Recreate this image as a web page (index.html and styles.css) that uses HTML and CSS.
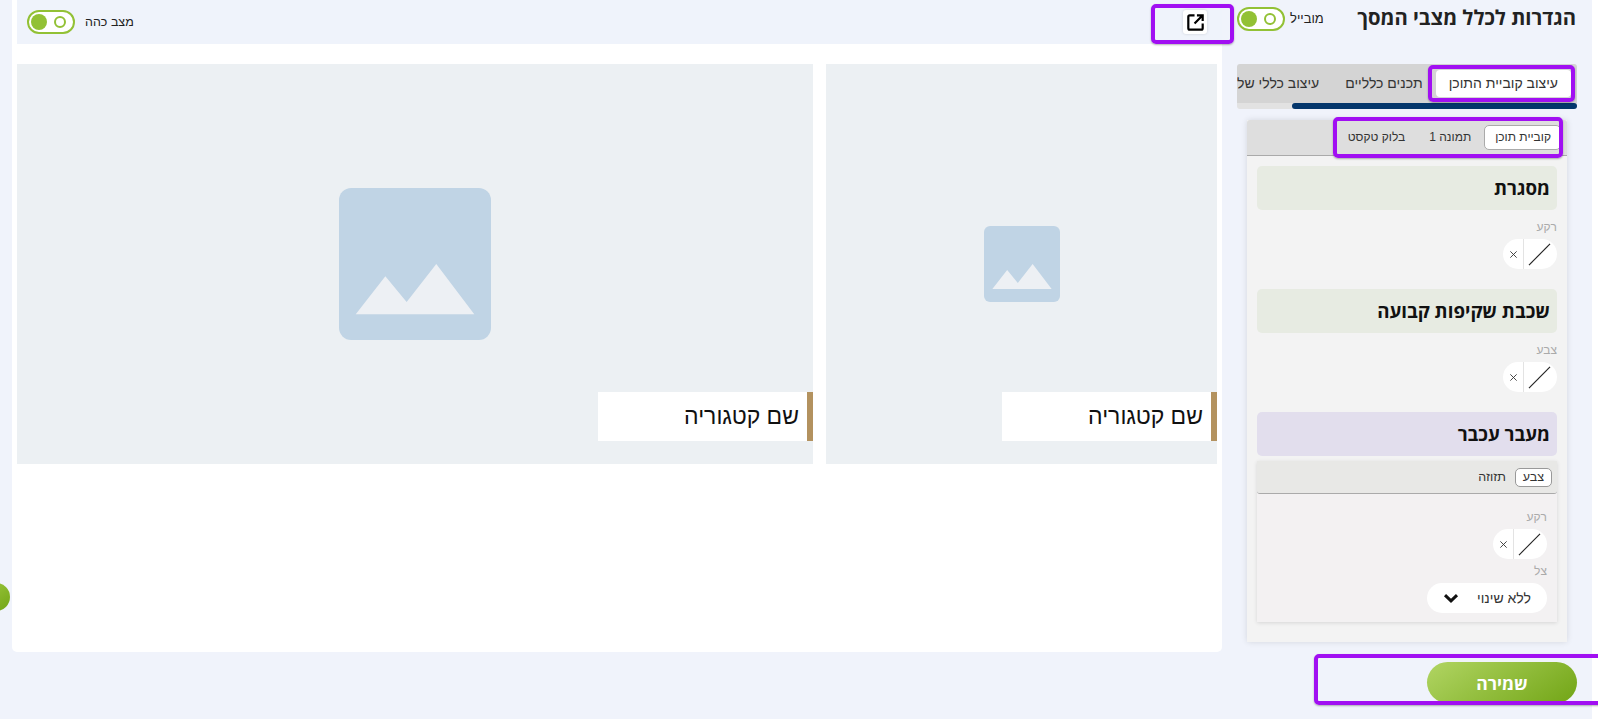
FILE: index.html
```html
<!DOCTYPE html>
<html lang="he" dir="rtl">
<head>
    <meta charset="utf-8">
    <title>הגדרות לכלל מצבי המסך</title>
    <link rel="stylesheet" href="styles.css">
</head>
<body>
    <div class="page">
        <div class="sidebar">
            <div class="sidebar-head">
                <h1>הגדרות לכלל מצבי המסך</h1>
                <span class="toggle-label">מובייל</span>
                <span class="toggle"><i class="ring"></i><i class="knob"></i></span>
            </div>

            <div class="tabs">
                <div class="tab active">עיצוב קוביית התוכן</div>
                <div class="tab">תכנים כלליים</div>
                <div class="tab">עיצוב כללי של</div>
            </div>
            <div class="tabs-scroll"><div class="tabs-thumb"></div></div>

            <div class="panel">
                <div class="subtabs">
                    <div class="subtab active">קוביית תוכן</div>
                    <div class="subtab">תמונה 1</div>
                    <div class="subtab">בלוק טקסט</div>
                </div>
                <div class="panel-body">
                    <div class="section green">מסגרת</div>
                    <div class="field-label">רקע</div>
                    <div class="color-pick">
                        <span class="swatch"><svg viewBox="0 0 24 24"><path d="M1 23 23 1"/></svg></span>
                        <span class="clear"><svg viewBox="0 0 10 10"><path d="M1.5 1.5 8.5 8.5M8.5 1.5 1.5 8.5"/></svg></span>
                    </div>

                    <div class="section green">שכבת שקיפות קבועה</div>
                    <div class="field-label">צבע</div>
                    <div class="color-pick">
                        <span class="swatch"><svg viewBox="0 0 24 24"><path d="M1 23 23 1"/></svg></span>
                        <span class="clear"><svg viewBox="0 0 10 10"><path d="M1.5 1.5 8.5 8.5M8.5 1.5 1.5 8.5"/></svg></span>
                    </div>

                    <div class="section purple">מעבר עכבר</div>
                    <div class="hover-box">
                        <div class="hover-tabs">
                            <div class="hover-tab active">צבע</div>
                            <div class="hover-tab">תזוזה</div>
                        </div>
                        <div class="hover-body">
                            <div class="field-label">רקע</div>
                            <div class="color-pick">
                                <span class="swatch"><svg viewBox="0 0 24 24"><path d="M1 23 23 1"/></svg></span>
                                <span class="clear"><svg viewBox="0 0 10 10"><path d="M1.5 1.5 8.5 8.5M8.5 1.5 1.5 8.5"/></svg></span>
                            </div>
                            <div class="field-label shadow-label">צל</div>
                            <div class="select">
                                <span>ללא שינוי</span>
                                <svg viewBox="0 0 20 12"><path d="M2.5 2.5 10 9.5 17.5 2.5"/></svg>
                            </div>
                        </div>
                    </div>
                </div>
            </div>

            <div class="save-row">
                <button class="save">שמירה</button>
            </div>
        </div>

        <div class="main">
            <div class="topbar">
                <span class="open-link">
                    <svg viewBox="0 0 24 24"><path d="M11 4.500H6A1.500 1.500 0 0 0 4.500 6v12A1.500 1.500 0 0 0 6 19.500h12a1.500 1.500 0 0 0 1.500-1.500v-5M11 13 19 5M13.500 4.500h6v6"/></svg>
                </span>
                <div class="dark-mode">
                    <span class="dark-label">מצב כהה</span>
                    <span class="toggle"><i class="ring"></i><i class="knob"></i></span>
                </div>
            </div>

            <div class="cards">
                <div class="card small">
                    <svg class="placeholder" viewBox="0 0 100 100"><rect width="100" height="100" rx="8" fill="#c0d4e5"/><path d="M11 83 30.500 58 44.500 75 64 50 89 83Z" fill="#edf0f4"/></svg>
                    <div class="card-label">שם קטגוריה</div>
                </div>
                <div class="card large">
                    <svg class="placeholder" viewBox="0 0 100 100"><rect width="100" height="100" rx="8" fill="#c0d4e5"/><path d="M11 83 30.500 58 44.500 75 64 50 89 83Z" fill="#edf0f4"/></svg>
                    <div class="card-label">שם קטגוריה</div>
                </div>
            </div>
        </div>

        <div class="side-handle"></div>

        <!-- סימוני הדגשה מעל המסך -->
        <div class="mark mark-link"></div>
        <div class="mark mark-tab"></div>
        <div class="mark mark-subtabs"></div>
        <div class="mark mark-save"></div>
    </div>
</body>
</html>
```

FILE: styles.css
```css
html {
    background: white;
}
body {
    margin: 0;
    font-family: 'Liberation Sans', Arial, sans-serif;
    color: #222;
    overflow: hidden;
}
.page {
    position: relative;
    display: flex;
    width: 1592px;
    height: 719px;
    margin-right: 6px;
    background: #f0f3fb;
}

/* sidebar */
.sidebar {
    flex: none;
    width: 370px;
    box-sizing: border-box;
    padding: 0 15px;
}
.sidebar-head {
    display: flex;
    align-items: flex-start;
    height: 64px;
    padding-right: 1px;
}
.sidebar-head h1 {
    margin: 3px 0 0 0;
    font-family: 'Open Sans', 'Liberation Sans', sans-serif;
    font-size: 20.250px;
    line-height: 28px;
    font-weight: bold;
    white-space: nowrap;
}
.toggle-label {
    margin: 11px auto 0 5px;
    font-size: 13px;
    line-height: 16px;
}
.toggle {
    flex: none;
    display: flex;
    justify-content: space-between;
    align-items: center;
    box-sizing: border-box;
    width: 48px;
    height: 24px;
    padding: 0 7px 0 2px;
    border: 2.500px solid #92c135;
    border-radius: 12px;
    background: white;
}
.sidebar-head .toggle {
    margin-top: 7px;
}
.knob {
    width: 16px;
    height: 16px;
    border-radius: 50%;
    background: #92c135;
}
.ring {
    box-sizing: border-box;
    width: 12px;
    height: 12px;
    border: 2px solid #92c135;
    border-radius: 50%;
}

/* tabs */
.tabs {
    display: flex;
    box-sizing: border-box;
    height: 39px;
    padding: 6px 6px 0 0;
    background: #d4d4d4;
    border-radius: 3px 3px 0 0;
    overflow: hidden;
    white-space: nowrap;
}
.tab {
    flex: none;
    height: 27px;
    padding: 0 13px;
    font-size: 14px;
    line-height: 27px;
    color: #333;
}
.tab.active {
    background: white;
    border-radius: 4px;
}
.tabs-scroll {
    height: 6px;
    background: #e2e2e2;
    border-radius: 0 0 3px 3px;
}
.tabs-thumb {
    width: 285px;
    height: 6px;
    background: #04366b;
    border-radius: 3px;
}

/* panel */
.panel {
    margin: 11px 10px 0;
    height: 522px;
    box-sizing: border-box;
    background: #f3f3f3;
    box-shadow: 0 0 6px rgba(0,0,0,0.12);
}
.subtabs {
    display: flex;
    align-items: center;
    box-sizing: border-box;
    height: 36px;
    padding-right: 6px;
    background: #dedede;
    border-bottom: 1px solid #aaa;
    border-radius: 3px 3px 0 0;
}
.subtab {
    padding: 0 11px;
    margin-left: 2px;
    height: 25px;
    line-height: 25px;
    font-size: 12px;
    color: #333;
    box-sizing: border-box;
    white-space: nowrap;
}
.subtab.active {
    padding: 0 9px 0 10px;
    background: white;
    border: 1px solid #aaa;
    border-radius: 5px;
    line-height: 23px;
}
.panel-body {
    padding: 10px 10px 0;
}
.section {
    box-sizing: border-box;
    height: 44px;
    padding: 0 7px;
    border-radius: 5px;
    font-family: 'Open Sans', 'Liberation Sans', sans-serif;
    font-size: 18.700px;
    font-weight: bold;
    line-height: 44px;
    color: #111;
}
.section.green {
    background: #e7ebe2;
}
.section.purple {
    background: #e2deed;
}
.field-label {
    margin-top: 10px;
    font-size: 12px;
    line-height: 14px;
    color: #aaa;
}
.color-pick {
    display: flex;
    width: 54px;
    height: 30px;
    margin-top: 5px;
    margin-bottom: 20px;
    background: white;
    border-radius: 15px;
    overflow: hidden;
}
.swatch {
    flex: none;
    box-sizing: border-box;
    width: 34px;
    padding: 4px 6px;
    border-left: 1px solid #e3e3e3;
}
.swatch svg {
    display: block;
    width: 23px;
    height: 23px;
    fill: none;
    stroke: #222;
    stroke-width: 1.200;
}
.clear {
    flex: 1;
    display: flex;
    align-items: center;
    justify-content: center;
}
.clear svg {
    width: 9px;
    height: 9px;
    fill: none;
    stroke: #333;
    stroke-width: 1;
}

/* hover box */
.hover-box {
    height: 161px;
    margin-top: 5px;
    background: #f3f1f2;
    box-shadow: 0 1px 4px rgba(0,0,0,0.12);
}
.hover-tabs {
    display: flex;
    align-items: center;
    box-sizing: border-box;
    height: 33px;
    padding-right: 5px;
    background: #e8e8e6;
    border-bottom: 1px solid #aaa;
    border-radius: 0 0 3px 3px;
    font-size: 12.500px;
    color: #333;
}
.hover-tab {
    margin-left: 9px;
}
.hover-tab.active {
    box-sizing: border-box;
    width: 37px;
    height: 19px;
    line-height: 17px;
    text-align: center;
    background: white;
    border: 1px solid #999;
    border-radius: 5px;
}
.hover-body {
    padding: 0 10px;
}
.hover-body .field-label {
    margin-top: 16px;
}
.hover-body .color-pick {
    margin-bottom: 0;
}
.hover-body .shadow-label {
    margin-top: 5px;
}
.select {
    display: flex;
    align-items: center;
    justify-content: space-between;
    box-sizing: border-box;
    width: 120px;
    height: 30px;
    margin-top: 5px;
    padding: 0 16px;
    background: white;
    border-radius: 15px;
    font-size: 14px;
    color: #333;
}
.select svg {
    width: 16px;
    height: 10px;
    fill: none;
    stroke: #111;
    stroke-width: 3.800;
}

/* save */
.save-row {
    padding-top: 20px;
}
.save {
    display: block;
    width: 150px;
    height: 41px;
    border: none;
    border-radius: 21px;
    background: linear-gradient(145deg, #b1d563, #72a516);
    color: white;
    font-family: 'Open Sans', 'Liberation Sans', sans-serif;
    font-size: 17.500px;
    font-weight: bold;
}

/* main */
.main {
    flex: none;
    width: 1210px;
    height: 652px;
    margin-left: 10px;
    background: white;
    border-radius: 0 0 5px 5px;
}
.topbar {
    display: flex;
    align-items: center;
    justify-content: space-between;
    box-sizing: border-box;
    height: 44px;
    margin-left: 5px;
    padding: 0 15px 0 10px;
    background: #eff3fb;
}
.open-link {
    display: flex;
    align-items: center;
    justify-content: center;
    width: 24px;
    height: 24px;
    background: white;
    border-radius: 3px;
    box-shadow: 0 0 3px rgba(0,0,0,0.15);
}
.open-link svg {
    width: 23px;
    height: 23px;
    fill: none;
    stroke: black;
    stroke-width: 2.300;
}
.dark-mode {
    display: flex;
    align-items: center;
    gap: 10px;
}
.dark-label {
    font-size: 12.500px;
}
.cards {
    display: flex;
    gap: 13px;
    margin: 20px 5px 0;
}
.card {
    position: relative;
    display: flex;
    align-items: center;
    justify-content: center;
    height: 400px;
    background: #ecf0f3;
}
.card.small {
    width: 391px;
}
.card.large {
    width: 796px;
}
.card.small .placeholder {
    width: 76px;
    height: 76px;
}
.card.large .placeholder {
    width: 152px;
    height: 152px;
}
.card-label {
    position: absolute;
    right: 0;
    bottom: 23px;
    box-sizing: border-box;
    width: 215px;
    height: 49px;
    padding-right: 8px;
    background: white;
    border-right: 6px solid #b3925f;
    font-size: 23px;
    line-height: 49px;
    color: #111;
}

.side-handle {
    position: absolute;
    left: -18px;
    top: 583px;
    width: 28px;
    height: 28px;
    border-radius: 50%;
    background: linear-gradient(145deg, #9dc83f, #72a516);
}

/* highlights */
.mark {
    position: absolute;
    box-sizing: border-box;
    border: 4px solid #a10ff2;
    border-radius: 5px;
    box-shadow: 0 1px 2px rgba(0,0,0,0.3);
}
.mark-link {
    left: 1151px;
    top: 4px;
    width: 83px;
    height: 40px;
}
.mark-tab {
    left: 1428px;
    top: 65px;
    width: 147px;
    height: 37px;
}
.mark-subtabs {
    left: 1333px;
    top: 117px;
    width: 230px;
    height: 41px;
}
.mark-save {
    left: 1314px;
    top: 654px;
    width: 300px;
    height: 51px;
}
```
